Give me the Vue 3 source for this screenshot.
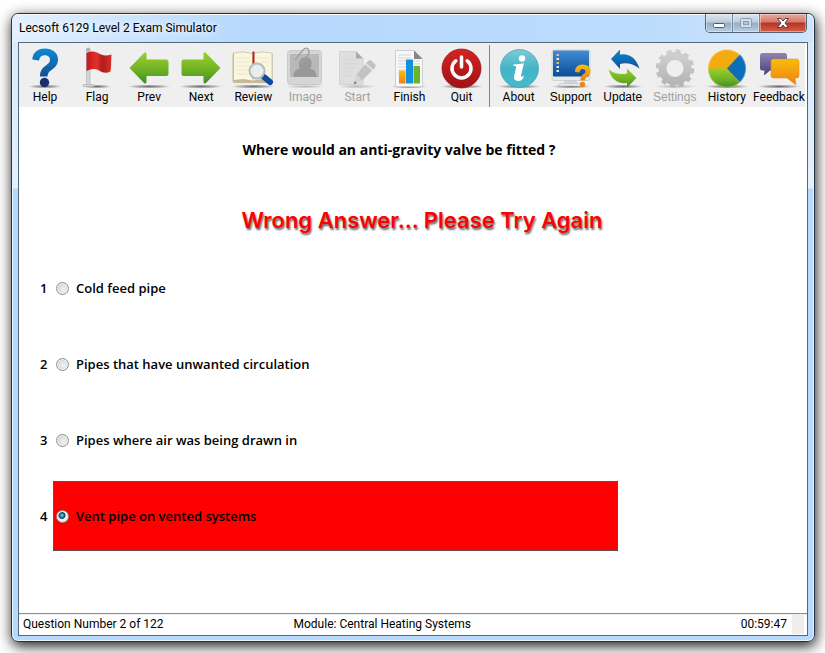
<template>
  <div class="desktop">
    <!-- shared gradients -->
    <svg class="defs" width="0" height="0" aria-hidden="true">
      <defs>
        <linearGradient id="gBlue" x1="0" y1="0" x2="0" y2="1">
          <stop offset="0" stop-color="#0b8ad6" />
          <stop offset="1" stop-color="#14508f" />
        </linearGradient>
        <linearGradient id="gGreen" x1="0" y1="0" x2="0" y2="1">
          <stop offset="0" stop-color="#9bd02c" />
          <stop offset="0.6" stop-color="#6cb024" />
          <stop offset="1" stop-color="#3f8a2c" />
        </linearGradient>
        <linearGradient id="gRed" x1="0" y1="0" x2="1" y2="0">
          <stop offset="0" stop-color="#c01a1c" />
          <stop offset="0.4" stop-color="#e3302b" />
          <stop offset="0.65" stop-color="#b01c1c" />
          <stop offset="1" stop-color="#da2f2b" />
        </linearGradient>
        <linearGradient id="gQuit" x1="0" y1="0" x2="0" y2="1">
          <stop offset="0" stop-color="#d42422" />
          <stop offset="1" stop-color="#a01216" />
        </linearGradient>
        <linearGradient id="gAqua" x1="0" y1="0" x2="0" y2="1">
          <stop offset="0" stop-color="#7ccbd6" />
          <stop offset="0.5" stop-color="#45b4c6" />
          <stop offset="1" stop-color="#41bccb" />
        </linearGradient>
        <linearGradient id="gScreen" x1="0" y1="0" x2="0" y2="1">
          <stop offset="0" stop-color="#3f8dd2" />
          <stop offset="1" stop-color="#0d4b96" />
        </linearGradient>
        <linearGradient id="gOrange" x1="0" y1="0" x2="0" y2="1">
          <stop offset="0" stop-color="#f9bd0c" />
          <stop offset="1" stop-color="#ee8012" />
        </linearGradient>
        <linearGradient id="gPurple" x1="0" y1="0" x2="0" y2="1">
          <stop offset="0" stop-color="#8f85b3" />
          <stop offset="1" stop-color="#493b78" />
        </linearGradient>
        <linearGradient id="gGrey" x1="0" y1="0" x2="0" y2="1">
          <stop offset="0" stop-color="#cecece" />
          <stop offset="1" stop-color="#b6b6b6" />
        </linearGradient>
        <radialGradient id="gShadow">
          <stop offset="0" stop-color="#000" stop-opacity="0.55" />
          <stop offset="0.6" stop-color="#000" stop-opacity="0.25" />
          <stop offset="1" stop-color="#000" stop-opacity="0" />
        </radialGradient>
      </defs>
    </svg>

    <main class="window">
      <header class="titlebar">
        <h1 class="title">Lecsoft 6129 Level 2 Exam Simulator</h1>
        <div class="controls">
          <button class="ctl" type="button" aria-label="Minimize">
            <svg width="14" height="12" viewBox="0 0 14 12"><rect x="1.5" y="6.5" width="11" height="4" rx="1" fill="#fff" stroke="#535a66" /></svg>
          </button>
          <button class="ctl" type="button" aria-label="Maximize" disabled>
            <svg width="14" height="12" viewBox="0 0 14 12">
              <rect x="1.5" y="1.5" width="11" height="9" rx="1" fill="#cfdcea" stroke="#8d9cae" />
              <rect x="4.5" y="4.5" width="5" height="3" fill="#b4c5d8" stroke="#8d9cae" />
            </svg>
          </button>
          <button class="ctl close" type="button" aria-label="Close">
            <svg width="14" height="12" viewBox="0 0 14 12">
              <path d="M1.5 1.5H5L7 4L9 1.5H12.500L9 6L12.500 10.500H9L7 8L5 10.500H1.500L5 6Z" fill="#fff" stroke="#51414a" />
            </svg>
          </button>
        </div>
      </header>

      <div class="client">
        <nav class="toolbar" aria-label="Exam tools">
          <button v-for="tool in examTools" :key="tool.name" class="tool" type="button" :disabled="tool.disabled">
            <svg class="icon" viewBox="0 0 52 44" aria-hidden="true">
              <ellipse cx="26" cy="40.500" :rx="tool.shadow" ry="2" fill="url(#gShadow)" :opacity="tool.disabled ? 0.4 : 1" />
              <g v-if="tool.name === 'Help'">
                <path d="M13.300 13.500C13.800 6.500 18.500 2.500 25.500 2.500C33.500 2.500 39 6.800 39 13.300C39 18.800 36 21.500 32.500 24C29.800 26 29 27 28.500 30.500H21C21 25.500 22.500 22.800 26.300 20C29.500 17.600 31 16.300 31 13.500C31 10.800 28.800 9.200 25.800 9.200C22.500 9.200 20.500 11 20 14.500Z" fill="url(#gBlue)" />
                <circle cx="25.500" cy="36.500" r="4.700" fill="#1a2f6c" />
              </g>
              <g v-else-if="tool.name === 'Flag'">
                <rect x="15.500" y="3" width="3.500" height="36" fill="#d3d5d8" stroke="#a9adb1" stroke-width="0.600" />
                <circle cx="17.200" cy="3.500" r="2" fill="#aeb1b4" />
                <rect x="12" y="38.500" width="11" height="2" rx="1" fill="#d9d9d9" stroke="#a2a2a2" stroke-width="0.500" />
                <path d="M15.500 7C22 3.500 26 6.500 30 8.500C34 10.300 37 9.500 40.500 8.500C40 14 40.500 20 39.500 25.500C35.500 27.500 32 27 28 24.500C24 22.200 20 22.500 15.500 25Z" fill="url(#gRed)" />
              </g>
              <path v-else-if="tool.name === 'Prev'" d="M6.500 22L21.500 6.500Q23.500 5.500 23.500 8V13.500H43Q45.500 13.500 45.500 16V27.500Q45.500 30 43 30H23.500V35.500Q23.500 38.500 21 37Z" fill="url(#gGreen)" />
              <path v-else-if="tool.name === 'Next'" d="M45.500 22L30.500 6.500Q28.500 5.500 28.500 8V13.500H9Q6.500 13.500 6.500 16V27.500Q6.500 30 9 30H28.500V35.500Q28.500 38.500 31 37Z" fill="url(#gGreen)" />
              <g v-else-if="tool.name === 'Review'">
                <rect x="5.500" y="7" width="40" height="30" rx="2" fill="#c8b998" />
                <path d="M6.500 7Q16 4.500 25.800 7.500Q35 4.500 45 7V34.500Q35 32.500 25.800 35Q16 32.500 6.500 34.500Z" fill="#faf7de" stroke="#b6ad91" stroke-width="0.600" />
                <path d="M9 12H23M9 16H23M9 20H23M9 24H23M9 28H21M29 12H42M34 16H42M39 20H42M40 24H42" stroke="#ebe7cd" stroke-width="1" />
                <path d="M25.800 7.500V35" stroke="#cfc6a4" />
                <path d="M25.500 5.500H27.500V17.500L26.500 19L25.500 17.500Z" fill="#b3201f" />
                <path d="M37 31L43 36" stroke="#0d4b9d" stroke-width="6" stroke-linecap="round" />
                <circle cx="30" cy="25" r="7.500" fill="#e6edf0" fill-opacity="0.900" stroke="#b4bbc0" stroke-width="2" />
              </g>
              <g v-else-if="tool.name === 'Image'">
                <rect x="8.500" y="4.500" width="34" height="34" rx="3" fill="#d6d6d6" stroke="#cacaca" />
                <rect x="11" y="8" width="29" height="23" fill="#b9b9b9" />
                <path d="M14 31C15 24 18 23.500 21 22.500C18 18 21 11 27 11C33 11 34 18 31 22.500C35 23.500 37 25 38 31Z" fill="#999" />
                <path d="M16 14L24 4Q27 1 29.500 3.500Q31 6 29 9L20 19" fill="none" stroke="#a2a2a2" stroke-width="1.400" />
              </g>
              <g v-else-if="tool.name === 'Start'">
                <path d="M8.500 5.500H25L32 12.500V38.500H8.500Z" fill="#dedede" stroke="#d3d3d3" />
                <path d="M25 5.500V12.500H32Z" fill="#a9a9a9" />
                <path d="M12 14H25M12 18H27M12 22H25M12 26H22M12 30H21" stroke="#d5d5d5" />
                <path d="M37 15L39.500 14L44.500 18.500V21L31 34.500L23 38.500L26 28Z" fill="#c2c2c2" />
                <path d="M34.500 17.500L41.500 24" stroke="#e0e0e0" stroke-width="2" />
                <path d="M26 28L31 34.500L23 38.500Z" fill="#d5d5d5" />
                <path d="M24 35L26 37L22.500 38.500Z" fill="#808080" />
              </g>
              <g v-else-if="tool.name === 'Finish'">
                <path d="M12.500 4.500H31L39.500 13V40.500H12.500Z" fill="#f8f8f8" stroke="#cfcfcf" />
                <path d="M31 4.500V13H39.500Z" fill="#858585" />
                <path d="M15 9H28M15 12H28M15 15H37M15 18H37M15 21H37M15 24H37M15 27H37M15 30H37" stroke="#d5d5d5" />
                <rect x="16" y="24.500" width="6.500" height="13" fill="url(#gOrange)" />
                <rect x="23" y="13.500" width="7" height="24" fill="#1490dd" />
                <rect x="30.500" y="20" width="6.500" height="17.500" fill="#69b42a" />
              </g>
              <g v-else>
                <circle cx="25.500" cy="22.500" r="19.500" fill="url(#gQuit)" stroke="#8e1115" stroke-width="0.700" />
                <path d="M19.800 14.800A9.500 9.500 0 1 0 31.200 14.800" fill="none" stroke="#fff" stroke-width="3.500" stroke-linecap="round" />
                <path d="M25.500 11V21" stroke="#fff" stroke-width="3.500" stroke-linecap="round" />
              </g>
            </svg>
            <span class="label">{{ tool.name }}</span>
          </button>

          <span class="divider"></span>

          <button v-for="tool in appTools" :key="tool.name" class="tool" type="button" :disabled="tool.disabled">
            <svg class="icon" viewBox="0 0 52 44" aria-hidden="true">
              <ellipse cx="26" cy="40.500" :rx="tool.shadow" ry="2" fill="url(#gShadow)" :opacity="tool.disabled ? 0.4 : 1" />
              <g v-if="tool.name === 'About'">
                <circle cx="26.500" cy="22.500" r="19" fill="url(#gAqua)" stroke="#3ba3b3" stroke-width="0.700" />
                <circle cx="29" cy="12.500" r="3.200" fill="#fff" />
                <path d="M20.500 18.500Q26 18.200 31 17.200L28 29.500Q27.500 32 31 29.500Q30 35 25 35Q20 34.500 21.200 29.500L23.200 21Q23 19.700 20.500 19.700Z" fill="#fff" />
              </g>
              <g v-else-if="tool.name === 'Support'">
                <path d="M20 34H31L33 38H18Z" fill="#d3d3d3" />
                <rect x="14" y="37.500" width="23" height="2.500" rx="1" fill="#e8e8e8" stroke="#bdbdbd" stroke-width="0.500" />
                <rect x="7" y="4" width="38" height="30.500" rx="2" fill="#e6e8ea" stroke="#c3c7cc" stroke-width="0.700" />
                <rect x="8" y="4.500" width="36" height="26" rx="1" fill="url(#gScreen)" />
                <path d="M11.500 8H14V10H11.500Z" fill="#f6b0a0" />
                <path d="M11.500 12H14V14H11.500Z" fill="#eee" />
                <path d="M11.500 16H14V18H11.500Z" fill="#f3c433" />
                <path d="M11.500 20H14V22H11.500ZM11.500 24H14V26H11.500Z" fill="#dce8f4" />
                <path d="M30 26Q30 18.500 37.500 18.500Q45.500 18.500 45.500 25Q45.500 29.500 41.500 31Q40 32 40 34.500H35.500Q35 30 38.500 28Q41 27 40.500 25Q40 23 37.500 23Q35 23 34.500 26.500Z" fill="url(#gOrange)" />
                <circle cx="37.500" cy="38.500" r="2.700" fill="#ef8713" />
              </g>
              <g v-else-if="tool.name === 'Update'">
                <path d="M14 13L23 3.500V8.500Q37 6.500 42.500 22.500Q33 15.500 23 18V23Z" fill="url(#gBlue)" />
                <path d="M39.500 32L30 41.500V37Q16 38.500 11.500 23.500Q20 29.500 30 27.500V22.500Z" fill="url(#gGreen)" />
              </g>
              <g v-else-if="tool.name === 'Settings'">
                <circle cx="26" cy="22.500" r="17" fill="none" stroke="url(#gGrey)" stroke-width="4.500" stroke-dasharray="4.900 4" />
                <circle cx="26" cy="22.500" r="12.500" fill="none" stroke="url(#gGrey)" stroke-width="8" />
              </g>
              <g v-else-if="tool.name === 'History'">
                <circle cx="26" cy="22.500" r="19" fill="#f3ab0f" />
                <path d="M26 22.500H7A19 19 0 0 0 38.500 36.800Z" fill="url(#gGreen)" />
                <path d="M26 22.500L39 8.600A19 19 0 0 1 39 36.300Z" fill="#0a6fbb" />
                <circle cx="26" cy="22.500" r="18.600" fill="none" stroke="#fff" stroke-opacity="0.300" />
              </g>
              <g v-else>
                <path d="M9.500 7H31.500Q34 7 34 9.500V22Q34 24.500 31.500 24.500H17L11 29.500L11.500 24.500H9.500Q7 24.500 7 22V9.500Q7 7 9.500 7Z" fill="url(#gPurple)" />
                <path d="M20.500 13H43.500Q46 13 46 15.500V29.500Q46 32 43.500 32H42L43 39L34 32H20.500Q18 32 18 29.500V15.500Q18 13 20.500 13Z" fill="url(#gOrange)" stroke="#e58a10" stroke-width="0.500" />
              </g>
            </svg>
            <span class="label" :class="{ plain: tool.plain }">{{ tool.name }}</span>
          </button>
        </nav>

        <section class="exam">
          <h2 class="question">Where would an anti-gravity valve be fitted ?</h2>
          <p class="verdict">Wrong Answer... Please Try Again</p>

          <div class="answers" role="radiogroup" aria-label="Answers">
            <div v-for="(answer, i) in answers" :key="answer" class="answer">
              <span class="number">{{ i + 1 }}</span>
              <label class="choice" :class="{ wrong: selected === i }">
                <input v-model="selected" class="radio" type="radio" name="answer" :value="i" />
                <span>{{ answer }}</span>
              </label>
            </div>
          </div>
        </section>

        <footer class="status">
          <span>Question Number 2 of 122</span>
          <span>Module: Central Heating Systems</span>
          <span class="clock">00:59:47</span>
          <span class="grip"></span>
        </footer>
      </div>
    </main>
  </div>
</template>

<script setup>
import { ref } from 'vue'

const examTools = [
  { name: 'Help', shadow: 17 },
  { name: 'Flag', shadow: 14 },
  { name: 'Prev', shadow: 22 },
  { name: 'Next', shadow: 22 },
  { name: 'Review', shadow: 22 },
  { name: 'Image', shadow: 20, disabled: true },
  { name: 'Start', shadow: 20, disabled: true },
  { name: 'Finish', shadow: 18 },
  { name: 'Quit', shadow: 22 }
]

const appTools = [
  { name: 'About', shadow: 22 },
  { name: 'Support', shadow: 20, plain: true },
  { name: 'Update', shadow: 20, plain: true },
  { name: 'Settings', shadow: 22, plain: true, disabled: true },
  { name: 'History', shadow: 22 },
  { name: 'Feedback', shadow: 22 }
]

const answers = [
  'Cold feed pipe',
  'Pipes that have unwanted circulation',
  'Pipes where air was being drawn in',
  'Vent pipe on vented systems'
]

const selected = ref(3)
</script>

<style>
body {
  background: #fff;
}
</style>

<style scoped>
.desktop {
  display: flex;
  box-sizing: border-box;
  min-height: 100vh;
  padding: 13px 10px 11px 11px;
  font-family: Roboto, 'Open Sans', sans-serif;
  font-size: 12px;
  color: #000;
}

.defs {
  position: absolute;
}

.window {
  flex: 1;
  display: flex;
  flex-direction: column;
  min-width: 0;
  padding: 0 6px 5px;
  border: 1px solid #26323e;
  border-radius: 7px;
  background: linear-gradient(#d5e8fb, #e4f1fd 174px, #b7d9fd 175px, #b7d9fd);
  box-shadow: inset 0 0 0 1px #e6f4ff, 1px 4px 14px rgba(0, 0, 0, 0.9);
}

/* title bar */
.titlebar {
  display: flex;
  justify-content: space-between;
  height: 28px;
  margin: 0 -5px;
  padding: 0 6px 0 5px;
  border-radius: 6px 6px 0 0;
  background: linear-gradient(90deg, #e2f0ff, #b5d8fc 30%, #bcdcfc 80%, #cfe5fc);
  box-shadow: inset 0 1px #f2f9ff;
}

.title {
  margin: 0;
  padding-left: 1px;
  font-size: 12px;
  font-weight: 400;
  line-height: 28px;
  text-shadow: 0 0 8px #fff, 0 0 8px #fff;
}

.controls {
  display: flex;
  height: 19px;
  border: 1px solid #526277;
  border-top: 0;
  border-radius: 0 0 5px 5px;
  box-sizing: border-box;
  overflow: hidden;
}

.ctl {
  display: flex;
  align-items: center;
  justify-content: center;
  width: 27px;
  padding: 0;
  border: 0;
  border-right: 1px solid #76879c;
  background: linear-gradient(#dbe6f1, #bccbdc 45%, #98acc4 50%, #b9cde2);
  box-shadow: inset 0 0 0 1px rgba(255, 255, 255, 0.4);
}

.close {
  width: 46px;
  border: 0;
  background: linear-gradient(#e8ab9e, #d5776a 45%, #b93222 50%, #d2614b);
}

/* client area */
.client {
  flex: 1;
  display: flex;
  flex-direction: column;
  border: 1px solid #54687c;
  background: #fff;
}

.toolbar {
  display: flex;
  height: 64px;
  margin-right: 2px;
  background: #efefef;
}

.tool {
  flex: 1 1 0;
  display: flex;
  flex-direction: column;
  align-items: center;
  min-width: 0;
  padding: 3px 0 0;
  border: 0;
  background: none;
  font-family: inherit;
  color: #000;
}

.tool:disabled {
  color: #a0a0a0;
}

.icon {
  width: 52px;
  height: 44px;
}

.label {
  font-size: 12px;
  line-height: 14px;
  white-space: nowrap;
}

.plain {
  font-family: 'Liberation Sans', Arial, sans-serif;
}

.divider {
  width: 1px;
  margin: 2px 3px 0 1px;
  background: #858585;
}

/* question */
.exam {
  flex: 1;
  padding: 33px 0 24px;
  font-family: 'Open Sans', 'Noto Sans', sans-serif;
}

.question {
  margin: 0;
  padding-right: 28px;
  font-size: 14px;
  font-weight: 700;
  line-height: 20px;
  text-align: center;
}

.verdict {
  margin: 44px 0 17px;
  padding-left: 18px;
  font-family: 'Inter', sans-serif;
  font-size: 22px;
  font-weight: 600;
  line-height: 32px;
  text-align: center;
  color: #f00;
  text-shadow: 1px 2px 2px rgba(0, 0, 0, 0.6);
}

.answers {
  display: flex;
  flex-direction: column;
  gap: 6px;
  margin-right: 24%;
  padding-left: 21px;
  font-size: 13px;
  font-weight: 600;
}

.answer {
  display: flex;
  align-items: center;
}

.number {
  width: 13px;
}

.choice {
  flex: 1;
  display: flex;
  align-items: center;
  gap: 7px;
  height: 68px;
  padding-left: 2px;
  border: 1px solid transparent;
}

.wrong {
  border-color: #6b4a4a;
  background: #f00;
}

.radio {
  appearance: none;
  width: 13px;
  height: 13px;
  margin: 0;
  border: 1px solid #8e8f8f;
  border-radius: 50%;
  background: radial-gradient(circle at 60% 60%, #f2f2f2, #c3c7cc);
  box-shadow: inset 0 0 0 1px #f4f4f4;
}

.radio:checked {
  background: radial-gradient(circle at 45% 40%, #7fd8f5 0, #1d7ca8 2px, #12384f 3px, #e8eef2 4px);
}

/* status bar */
.status {
  display: grid;
  grid-template-columns: 34% 1fr auto 12px;
  column-gap: 5px;
  padding: 1px 3px 1px 4px;
  border-top: 1px solid #8c8c8c;
  line-height: 19px;
  box-shadow: inset 0 1px #f0f0f0;
}

.clock {
  text-align: right;
}

.grip {
  background: #f0eded;
}
</style>
